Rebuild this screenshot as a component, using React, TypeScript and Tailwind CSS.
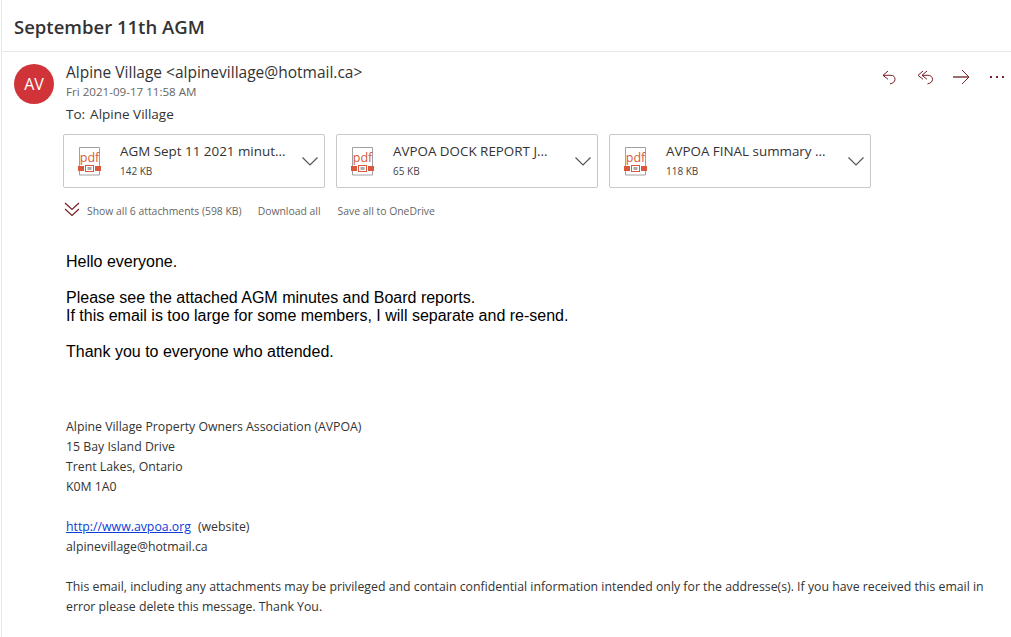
const segoe = { fontFamily: '"Open Sans", "Noto Sans", sans-serif' };

const attachments = [
  { name: "AGM Sept 11 2021 minut...", size: "142 KB" },
  { name: "AVPOA DOCK REPORT J...", size: "65 KB" },
  { name: "AVPOA FINAL summary ...", size: "118 KB" },
];

function PdfIcon() {
  return (
    <svg width="24" height="30" viewBox="0 0 24 30" className="shrink-0">
      <path d="M1.500 20V1.500h20V20M1.500 25v4h20v-4" fill="none" stroke="#a0a0a0" />
      <text x="11.500" y="15.500" textAnchor="middle" fontSize="12.500" fontWeight="500" fill="#d9583b" fontFamily="Open Sans">
        pdf
      </text>
      <rect x="0" y="20" width="6" height="5" fill="#d9583b" />
      <rect x="17" y="20" width="6" height="5" fill="#d9583b" />
      <rect x="7.500" y="19.500" width="8" height="6" fill="none" stroke="#d9583b" />
      <rect x="9.500" y="21" width="4" height="3" fill="#a8a8a8" />
    </svg>
  );
}

function Attachment({ name, size }: { name: string; size: string }) {
  return (
    <div className="flex h-[54px] w-[262px] shrink-0 items-center rounded-[2px] border border-[#c8c8c8] pl-[14px] pr-[6px]">
      <PdfIcon />
      <div className="ml-[18px] min-w-0 flex-1">
        <div className="-mt-[2px] text-[13.4px] leading-[18px] text-[#333]">{name}</div>
        <div className="mt-[4px] text-[10px] leading-[14px] text-[#444]">{size}</div>
      </div>
      <svg width="16" height="9" viewBox="0 0 16 9">
        <path d="M.5.5L8 8 15.500.5" fill="none" stroke="#555" strokeWidth="1.200" />
      </svg>
    </div>
  );
}

export default function App() {
  return (
    <div className="ml-px h-[637px] w-[1010px] overflow-hidden border-l border-[#e8e8e8] bg-white text-[#333]" style={segoe}>
      <div className="flex h-[52px] items-center border-b border-[#e8e8e8] pl-[12px] pt-[2px]">
        <h1 className="text-[18.500px] font-semibold text-[#333]">September 11th AGM</h1>
      </div>

      <div className="relative flex pl-[12px] pt-[12px]">
        <div className="flex h-10 w-10 shrink-0 items-center justify-center rounded-full bg-[#d13438] text-[16px] font-medium text-white">
          AV
        </div>
        <div className="ml-[12px] min-w-0 flex-1">
          <div className="text-[15.500px] leading-[16px] text-[#333]">Alpine Village &lt;alpinevillage@hotmail.ca&gt;</div>
          <div className="mt-[4px] text-[11.600px] leading-[15px] text-[#666]">Fri 2021-09-17 11:58 AM</div>
          <div className="mt-[6px] text-[13.500px] leading-[18px] text-[#333]">
            To:<span className="ml-[5px]">Alpine Village</span>
          </div>
          <div className="mt-[11px] -ml-[3px] flex gap-[11px]">
            {attachments.map((a) => (
              <Attachment key={a.name} name={a.name} size={a.size} />
            ))}
          </div>
          <div className="mt-[16px] -ml-[2px] flex items-center text-[10.400px] leading-[14px] text-[#666]">
            <svg width="16" height="15" viewBox="0 0 16 15" className="-mt-[3px] mr-[7px]">
              <path d="M1 1l7 6.500 7-6.500M1 7l7 6.500 7-6.500" fill="none" stroke="#7a1f27" strokeWidth="1.200" />
            </svg>
            <span>Show all 6 attachments (598 KB)</span>
            <span className="ml-[16px]">Download all</span>
            <span className="ml-[17px]">Save all to OneDrive</span>
          </div>

          <div className="mt-[35px] text-[16px] leading-[18px] text-black" style={{ fontFamily: '"Liberation Sans", Arial, sans-serif' }}>
            <p>Hello everyone.</p>
            <p className="mt-[18px]">Please see the attached AGM minutes and Board reports.</p>
            <p>If this email is too large for some members, I will separate and re-send.</p>
            <p className="mt-[18px]">Thank you to everyone who attended.</p>
          </div>

          <div className="mt-[56px] text-[12.300px] leading-[20px] text-[#333]">
            <p>Alpine Village Property Owners Association (AVPOA)</p>
            <p>15 Bay Island Drive</p>
            <p>Trent Lakes, Ontario</p>
            <p>K0M 1A0</p>
            <p className="mt-[20px]">
              <a className="text-[#0b3cd8] underline">http://www.avpoa.org</a>
              <span className="ml-[7px]">(website)</span>
            </p>
            <p>alpinevillage@hotmail.ca</p>
            <p className="mt-[20px] w-[930px]">
              This email, including any attachments may be privileged and contain confidential information intended only for the addresse(s). If you have received this email in error please delete this message. Thank You.
            </p>
          </div>
        </div>

        <div className="absolute right-[6px] top-[16px] flex items-center gap-[18px]">
          <svg width="18" height="18" viewBox="0 0 18 18">
            <path d="M7 3L2 7.300l5 4M2 7.300h8c2.500 0 4 1.500 4 4s-2 4-5 4.500" fill="none" stroke="#7a1f27" />
          </svg>
          <svg width="18" height="18" viewBox="0 0 18 18">
            <path d="M6 3L1 7.300l5 4M10 3L5 7.300l5 4M5 7.300h6c2.500 0 4.500 1.500 4.500 4s-2 4-5 4.500" fill="none" stroke="#7a1f27" />
          </svg>
          <svg width="18" height="18" viewBox="0 0 18 18">
            <path d="M0 9h15" fill="none" stroke="#9c6f6f" strokeWidth="2" />
            <path d="M9 2l7 7-7 7" fill="none" stroke="#7a1f27" />
          </svg>
          <svg width="16" height="18" viewBox="0 0 16 18">
            <rect x="1" y="8" width="2" height="2" fill="#7a1f27" />
            <rect x="7" y="8" width="2" height="2" fill="#7a1f27" />
            <rect x="13" y="8" width="2" height="2" fill="#7a1f27" />
          </svg>
        </div>
      </div>
    </div>
  );
}
